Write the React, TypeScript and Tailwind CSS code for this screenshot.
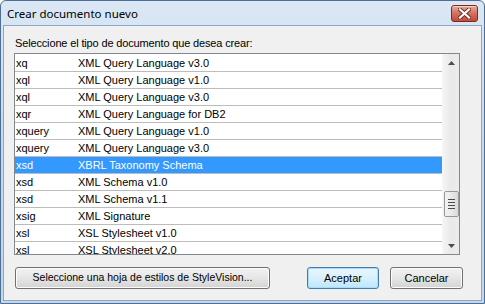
import React from "react";

const rows: [string, string][] = [
  ["xq", "XML Query Language v3.0"],
  ["xql", "XML Query Language v1.0"],
  ["xql", "XML Query Language v3.0"],
  ["xqr", "XML Query Language for DB2"],
  ["xquery", "XML Query Language v1.0"],
  ["xquery", "XML Query Language v3.0"],
  ["xsd", "XBRL Taxonomy Schema"],
  ["xsd", "XML Schema v1.0"],
  ["xsd", "XML Schema v1.1"],
  ["xsig", "XML Signature"],
  ["xsl", "XSL Stylesheet v1.0"],
  ["xsl", "XSL Stylesheet v2.0"],
];

const ui = { fontFamily: '"Liberation Sans", Arial, sans-serif' };

function CloseButton() {
  return (
    <div className="w-[27px] h-[17px] rounded-[3px] border border-[#7d2a1f] bg-gradient-to-b from-[#e9a998] via-[#d2705e] to-[#c24a35] flex items-center justify-center shadow-[inset_0_1px_0_rgba(255,255,255,0.5)]">
      <svg width="13" height="11" viewBox="0 0 13 11">
        <path d="M2 1.5 L11 9.5 M11 1.5 L2 9.5" stroke="#6b2a20" strokeWidth="4" strokeLinecap="square" />
        <path d="M2 1.5 L11 9.5 M11 1.5 L2 9.5" stroke="#ffffff" strokeWidth="2.2" strokeLinecap="square" />
      </svg>
    </div>
  );
}

function Btn({ children, w, primary, small }: { children: React.ReactNode; w: string; primary?: boolean; small?: boolean }) {
  return (
    <div
      className={
        "h-[22px] rounded-[3px] border flex items-center justify-center text-black " +
        (small ? "text-[10.5px] " : "text-[11px] ") +
        w +
        (primary
          ? " border-[#3c7fb1] bg-gradient-to-b from-[#eaf6fd] via-[#d9f0fc] to-[#bee6fd] shadow-[inset_0_0_0_1px_#a8dcf9]"
          : " border-[#707070] bg-gradient-to-b from-[#f2f2f2] via-[#e6e6e6] to-[#d3d3d3] shadow-[inset_0_0_0_1px_#fcfcfc]")
      }
      style={ui}
    >
      {children}
    </div>
  );
}

export default function App() {
  return (
    <div className="w-[485px] h-[304px] flex flex-col rounded-t-[6px] border border-[#4d6f96] bg-gradient-to-b from-[#dbe7f4] via-[#c5d8ee] to-[#c3d7ed] overflow-hidden">
      <div className="h-[24px] shrink-0 flex items-start justify-between pl-[6px] pr-[6px]">
        <span className="text-[11.5px] leading-[16px] mt-[5px] text-black" style={{ fontFamily: '"Noto Sans", "Open Sans", sans-serif' }}>
          Crear documento nuevo
        </span>
        <div className="mt-[4px]">
          <CloseButton />
        </div>
      </div>
      <div className="flex-1 mx-[2px] mb-[2px] border border-[#8ba6c6] bg-[#f0f0f0] flex flex-col pl-[10px]">
        <div className="mt-[11px] ml-[1px] h-[13px] leading-[13px] text-[11px] tracking-[-0.15px] text-black" style={ui}>
          Seleccione el tipo de documento que desea crear:
        </div>
        <div className="mt-[3px] w-[446px] h-[202px] border border-[#828790] bg-white flex overflow-hidden">
          <div className="flex-1 flex flex-col pt-[1px] overflow-hidden">
            {rows.map(([ext, desc], i) => {
              const sel = i === 6;
              return (
                <div
                  key={i}
                  className={
                    "h-[17px] shrink-0 flex items-center border-b border-[#bcbcbc] text-[11px] " +
                    (sel ? "bg-[#3399ff] text-white" : "text-black")
                  }
                  style={ui}
                >
                  <div className="w-[63px] pl-[1px] leading-[16px]">{ext}</div>
                  <div className="leading-[16px]">{desc}</div>
                </div>
              );
            })}
          </div>
          <div className="w-[17px] shrink-0 bg-gradient-to-r from-[#f4f4f4] via-[#e9e9e9] to-[#ececec] border-l border-[#f7f7f7] flex flex-col items-center">
            <div className="h-[17px] flex items-center justify-center">
              <svg width="7" height="4" viewBox="0 0 7 4">
                <path d="M3.5 0 L7 4 L0 4 Z" fill="#4d4d4d" />
              </svg>
            </div>
            <div className="h-[120px]" />
            <div className="w-[15px] h-[26px] rounded-[2px] border border-[#979797] bg-gradient-to-r from-[#f3f3f3] via-[#e9e9e9] to-[#dadada] flex flex-col items-center justify-center gap-[2px]">
              <div className="w-[7px] h-[1px] bg-[#4a4a4a]" />
              <div className="w-[7px] h-[1px] bg-[#4a4a4a]" />
              <div className="w-[7px] h-[1px] bg-[#4a4a4a]" />
              <div className="w-[7px] h-[1px] bg-[#4a4a4a]" />
            </div>
            <div className="flex-1" />
            <div className="h-[17px] flex items-center justify-center">
              <svg width="7" height="4" viewBox="0 0 7 4">
                <path d="M0 0 L7 0 L3.5 4 Z" fill="#4d4d4d" />
              </svg>
            </div>
          </div>
        </div>
        <div className="mt-[12px] flex items-center">
          <div className="ml-[1px]">
            <Btn w="w-[255px]" small>Seleccione una hoja de estilos de StyleVision...</Btn>
          </div>
          <div className="ml-[37px]">
            <Btn w="w-[72px]" primary>
              Aceptar
            </Btn>
          </div>
          <div className="ml-[11px]">
            <Btn w="w-[73px]">Cancelar</Btn>
          </div>
        </div>
      </div>
    </div>
  );
}
